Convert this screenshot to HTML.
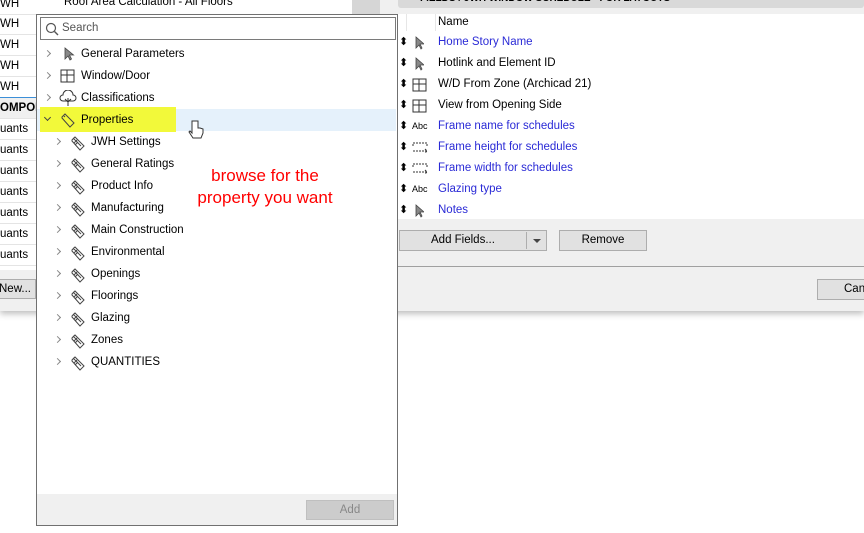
<!DOCTYPE html>
<html><head><style>
*{margin:0;padding:0;box-sizing:border-box}
body{width:864px;height:533px;background:#fff;font-family:"Liberation Sans",sans-serif;font-size:11.5px;color:#000;position:relative;overflow:hidden}
.a{position:absolute}
.lrow{position:absolute;left:0;width:36px;height:21px;border-bottom:1px solid #e4e4e4;line-height:20px;padding-left:0;white-space:nowrap;overflow:hidden}
.rrow{position:absolute;left:396px;width:468px;height:21px;line-height:21px}
.rrow .ar{position:absolute;left:3px;top:0;font-size:11px}
.rrow .ic{position:absolute;left:16px;top:4px}
.rrow .t{position:absolute;left:42px;top:0}
.blue{color:#2a2ad6}
.pop .row{position:absolute;left:0;width:359px;height:22px;line-height:22px}
.chev{position:absolute;top:8px;width:5px;height:5px;border-right:1.3px solid #888;border-top:1.3px solid #888;transform:rotate(45deg)}
</style></head><body>
<div class="a" style="left:0;top:0;width:864px;height:311px;background:#f0f0f0;box-shadow:0 3px 6px rgba(0,0,0,.25)"></div>
<div class="a" style="left:0;top:0;width:352px;height:270px;background:#fff"></div>
<div class="a" style="left:64px;top:-4px">Roof Area Calculation - All Floors</div>
<div class="a" style="left:352px;top:0;width:28px;height:14px;background:#d6d6d6"></div>
<div class="lrow" style="top:-6px">WH</div>
<div class="lrow" style="top:14px">WH</div>
<div class="lrow" style="top:35px">WH</div>
<div class="lrow" style="top:56px">WH</div>
<div class="lrow" style="top:77px;border-bottom:1px solid #3c8fd8">WH</div>
<div class="lrow" style="top:98px;background:#f0f0f0;font-weight:bold">OMPON</div>
<div class="lrow" style="top:119px">uants</div>
<div class="lrow" style="top:140px">uants</div>
<div class="lrow" style="top:161px">uants</div>
<div class="lrow" style="top:182px">uants</div>
<div class="lrow" style="top:203px">uants</div>
<div class="lrow" style="top:224px">uants</div>
<div class="lrow" style="top:245px">uants</div>
<div class="a" style="left:-2px;top:279px;width:38px;height:20px;border:1px solid #adadad;background:#e1e1e1;line-height:18px">New...</div>
<div class="a" style="left:398px;top:-6px;width:466px;height:14px;background:#d9d9d9;border-radius:3px;font-weight:bold;font-size:10px;padding-left:22px;line-height:10px">FIELDS / JWH WINDOW SCHEDULE - FOR LAYOUTS</div>
<div class="a" style="left:397px;top:14px;width:467px;height:205px;background:#fff"></div>
<div class="a" style="left:406px;top:14px;width:1px;height:17px;background:#e6e6e6"></div>
<div class="a" style="left:435px;top:14px;width:1px;height:17px;background:#e6e6e6"></div>
<div class="a" style="left:438px;top:16px">Name</div>
<div class="rrow" style="top:32px"><span class="ar">⬍</span><svg class="ic" width="12" height="14"><path d="M4 1v11l3-3 2 4 1-1-2-4h4z" fill="#888" stroke="#444" stroke-width=".8"/></svg><span class="t blue">Home Story Name</span></div>
<div class="rrow" style="top:53px"><span class="ar">⬍</span><svg class="ic" width="12" height="14"><path d="M4 1v11l3-3 2 4 1-1-2-4h4z" fill="#888" stroke="#444" stroke-width=".8"/></svg><span class="t">Hotlink and Element ID</span></div>
<div class="rrow" style="top:74px"><span class="ar">⬍</span><svg class="ic" width="16" height="14"><path d="M1 1h13v12H1zM1 6h13M7 1v12" fill="none" stroke="#333"/></svg><span class="t">W/D From Zone (Archicad 21)</span></div>
<div class="rrow" style="top:95px"><span class="ar">⬍</span><svg class="ic" width="16" height="14"><path d="M1 1h13v12H1zM1 6h13M7 1v12" fill="none" stroke="#333"/></svg><span class="t">View from Opening Side</span></div>
<div class="rrow" style="top:116px"><span class="ar">⬍</span><span class="a" style="left:16px;font-size:9px">Abc</span><span class="t blue">Frame name for schedules</span></div>
<div class="rrow" style="top:137px"><span class="ar">⬍</span><svg class="ic" width="16" height="14"><path d="M1 2h14M1 5v-3M15 5v-3M1 10h14M13 8l2 2-2 2" fill="none" stroke="#333" stroke-dasharray="2 1"/></svg><span class="t blue">Frame height for schedules</span></div>
<div class="rrow" style="top:158px"><span class="ar">⬍</span><svg class="ic" width="16" height="14"><path d="M1 2h14M1 5v-3M15 5v-3M1 10h14M13 8l2 2-2 2" fill="none" stroke="#333" stroke-dasharray="2 1"/></svg><span class="t blue">Frame width for schedules</span></div>
<div class="rrow" style="top:179px"><span class="ar">⬍</span><span class="a" style="left:16px;font-size:9px">Abc</span><span class="t blue">Glazing type</span></div>
<div class="rrow" style="top:200px"><span class="ar">⬍</span><svg class="ic" width="12" height="14"><path d="M4 1v11l3-3 2 4 1-1-2-4h4z" fill="#888" stroke="#444" stroke-width=".8"/></svg><span class="t blue">Notes</span></div>
<div class="a" style="left:399px;top:230px;width:148px;height:21px;border:1px solid #adadad;background:#e1e1e1"><span class="a" style="left:31px;top:3px">Add Fields...</span><span class="a" style="left:126px;top:1px;width:1px;height:17px;background:#adadad"></span><span class="a" style="left:133px;top:8px;border:4px solid transparent;border-top:4px solid #444"></span></div>
<div class="a" style="left:559px;top:230px;width:88px;height:21px;border:1px solid #adadad;background:#e1e1e1;text-align:center;line-height:19px">Remove</div>
<div class="a" style="left:397px;top:266px;width:467px;height:1px;background:#a0a0a0"></div>
<div class="a" style="left:397px;top:14px;width:1px;height:297px;background:#999"></div>
<div class="a" style="left:817px;top:279px;width:60px;height:21px;border:1px solid #adadad;background:#e1e1e1;line-height:19px;padding-left:26px">Cancel</div>
<div class="a pop" style="left:36px;top:14px;width:362px;height:512px;background:#fff;border:1px solid #707070">
 <div class="a" style="left:3px;top:2px;width:356px;height:23px;border:1px solid #7a7a7a"><svg class="a" style="left:4px;top:4px" width="14" height="14"><circle cx="6" cy="6" r="4.5" fill="none" stroke="#555" stroke-width="1.2"/><path d="M9.5 9.5l3.5 3.5" stroke="#555" stroke-width="1.4"/></svg><span class="a" style="left:21px;top:4px;color:#555">Search</span></div>
 <div class="row" style="top:28px"><span class="chev" style="left:8px"></span><svg class="a" style="left:26px;top:4px" width="12" height="14"><path d="M2 1v11l3-3 2 4 1.5-1-2-4h4z" fill="#888" stroke="#444" stroke-width=".8"/></svg><span class="a" style="left:44px">General Parameters</span></div>
 <div class="row" style="top:50px"><span class="chev" style="left:8px"></span><svg class="a" style="left:23px;top:4px" width="16" height="14"><path d="M1 1h13v12H1zM1 6h13M7 1v12" fill="none" stroke="#333"/></svg><span class="a" style="left:44px">Window/Door</span></div>
 <div class="row" style="top:72px"><span class="chev" style="left:8px"></span><svg class="a" style="left:22px;top:3px" width="18" height="16"><path d="M4 11a3 3 0 0 1 0-6 5 5 0 0 1 10 0 3 3 0 0 1 0 6zM9 8v8M6 9l3 3 3-3" fill="none" stroke="#333"/></svg><span class="a" style="left:44px">Classifications</span></div>
 <div class="row" style="top:94px;width:359px;background:#e5f1fb"></div>
 <div class="a" style="left:3px;top:92px;width:136px;height:25px;background:#f2f93a"></div>
 <div class="row" style="top:94px"><span class="chev" style="left:8px;top:6px;transform:rotate(135deg);border-color:#444"></span><svg class="a" style="left:23px;top:4px" width="16" height="15"><path d="M2 4l3-3 9 9-4 4-8-9zM4 3l1 1" fill="none" stroke="#444"/></svg><span class="a" style="left:44px">Properties</span></div>
 <svg class="a" style="left:150px;top:104px" width="18" height="24"><path d="M5 2v12l-2-2-1 1 4 6h8l2-5v-4l-3-1-2 0V2z" fill="#fff" stroke="#333"/></svg>
 <div class="a" style="left:146px;top:150px;color:#f00;font-size:17px;line-height:22px;text-align:center;width:164px">browse for the<br>property you want</div>
 <div id="sub"></div>
 <div class="a" style="left:0;top:479px;width:360px;height:31px;background:#f0f0f0"></div>
 <div class="a" style="left:269px;top:485px;width:88px;height:20px;background:#cccccc;border:1px solid #bfbfbf;color:#888;text-align:center;line-height:18px">Add</div>
</div>
<script>
var n=["JWH Settings","General Ratings","Product Info","Manufacturing","Main Construction","Environmental","Openings","Floorings","Glazing","Zones","QUANTITIES"],h="";
n.forEach(function(t,i){h+='<div class="row" style="top:'+(116+i*22)+'px"><span class="chev" style="left:18px"></span><svg class="a" style="left:33px;top:4px" width="18" height="16"><path d="M2 5l3-3 9 9-4 4-8-9zM4 8l3-3M5 10l3-3M3 3l8 8" fill="none" stroke="#444"/></svg><span class="a" style="left:54px">'+t+'</span></div>'});
document.getElementById("sub").outerHTML=h;
</script>
</body></html>
